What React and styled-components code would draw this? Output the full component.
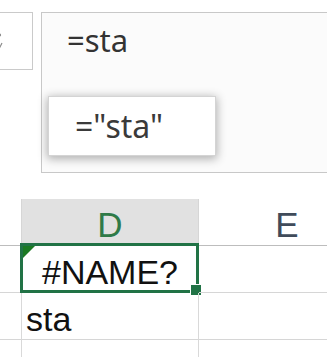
import React from "react";
import styled, { createGlobalStyle } from "styled-components";

const GlobalStyle = createGlobalStyle`
  html, body {
    margin: 0;
    padding: 0;
    background: #ffffff;
    overflow: hidden;
  }
  * {
    box-sizing: border-box;
  }
`;

const Page = styled.div`
  width: 327px;
  height: 357px;
  overflow: hidden;
  font-family: "Liberation Sans", Arial, sans-serif;
`;

// formula bar area
const TopBar = styled.div`
  display: flex;
  align-items: flex-start;
  padding-top: 12px;
  height: 173px;
`;

const NameBox = styled.div`
  flex: 0 0 43px;
  height: 58px;
  margin-left: -10px;
  border: 1px solid #cacaca;
  background: #ffffff;
  display: flex;
  align-items: center;
  justify-content: flex-end;
  padding-right: 29px;
`;

const FormulaBar = styled.div`
  position: relative;
  flex: 1;
  height: 161px;
  margin-left: 8px;
  margin-right: -10px;
  border: 1px solid #c8c8c8;
  background: #fbfbfb;
  padding: 9px 0 0 25px;
  font-family: "Noto Sans", "Liberation Sans", sans-serif;
  font-size: 31px;
  line-height: 37px;
  color: #333333;
`;

const Suggest = styled.div`
  position: absolute;
  left: 6px;
  top: 83px;
  width: 168px;
  height: 60px;
  background: #ffffff;
  border: 1px solid #d4d4d4;
  box-shadow: 0 2px 9px 1px rgba(0, 0, 0, 0.3);
  padding-left: 26px;
  font-size: 32px;
  line-height: 58px;
  color: #3a3a3a;
`;

// sheet grid
const Sheet = styled.div`
  margin-top: 26px;
  display: grid;
  grid-template-columns: 22px 177px 177px;
  grid-template-rows: 47px 47px 47px 47px;
`;

const HeadCell = styled.div`
  display: flex;
  align-items: flex-end;
  justify-content: center;
  padding-bottom: 1px;
  border-right: 1px solid #d6d6d6;
  border-bottom: 1px solid #bdbdbd;
  background: ${({ active }) => (active ? "#e1e1e1" : "#ffffff")};
  color: ${({ active }) => (active ? "#2f7a48" : "#404b5a")};
  font-size: 35px;
  line-height: 39px;
`;

const Cell = styled.div`
  position: relative;
  display: flex;
  align-items: flex-end;
  justify-content: ${({ center }) => (center ? "center" : "flex-start")};
  padding: 0 0 1px ${({ center }) => (center ? "0" : "4px")};
  border-right: 1px solid #d9d9d9;
  border-bottom: 1px solid #d6d6d6;
  font-size: 34px;
  line-height: 38px;
  color: #111111;
`;

const Selection = styled.div`
  position: absolute;
  top: -3px;
  left: -2px;
  right: -1px;
  bottom: -1px;
  border: 3px solid #217346;
  pointer-events: none;
`;

const FillHandle = styled.div`
  position: absolute;
  right: -3px;
  bottom: -3px;
  width: 10px;
  height: 10px;
  background: #217346;
  box-shadow: 0 0 0 1px #ffffff;
`;

const ErrorMark = styled.div`
  position: absolute;
  top: 0;
  left: 1px;
  width: 0;
  height: 0;
  border-top: 12px solid #1b7a23;
  border-right: 12px solid transparent;
`;

const Glyph = () => (
  <svg width="5" height="18" viewBox="0 0 5 18">
    <circle cx="1.5" cy="3" r="1.6" fill="#8a8a8a" />
    <path d="M-1 11 L1.5 16 L4 11" stroke="#8a8a8a" strokeWidth="1.2" fill="none" />
  </svg>
);

const App = () => {
  return (
    <Page>
      <GlobalStyle />
      <TopBar>
        <NameBox>
          <Glyph />
        </NameBox>
        <FormulaBar>
          =sta
          <Suggest>="sta"</Suggest>
        </FormulaBar>
      </TopBar>
      <Sheet>
        <HeadCell />
        <HeadCell active>D</HeadCell>
        <HeadCell>E</HeadCell>

        <Cell />
        <Cell center>
          <ErrorMark />
          #NAME?
          <Selection />
          <FillHandle />
        </Cell>
        <Cell />

        <Cell />
        <Cell>sta</Cell>
        <Cell />

        <Cell />
        <Cell />
        <Cell />
      </Sheet>
    </Page>
  );
};

export default App;
